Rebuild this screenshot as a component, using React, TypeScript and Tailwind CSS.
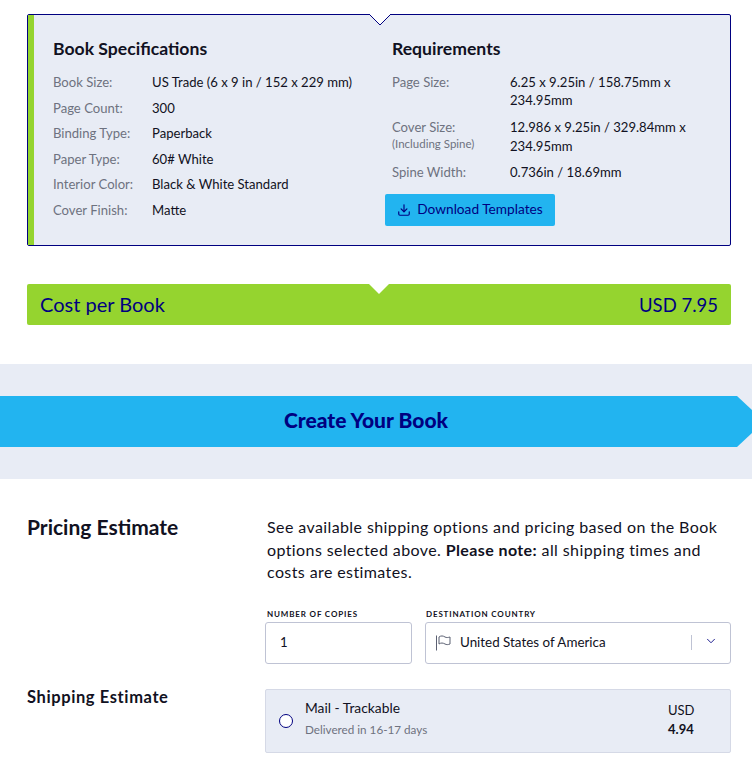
import { ChevronDown, Download } from "lucide-react";

const specs = [
  ["Book Size:", "US Trade (6 x 9 in / 152 x 229 mm)"],
  ["Page Count:", "300"],
  ["Binding Type:", "Paperback"],
  ["Paper Type:", "60# White"],
  ["Interior Color:", "Black & White Standard"],
  ["Cover Finish:", "Matte"],
];

export default function App() {
  return (
    <div className="min-h-[759px] overflow-hidden bg-white font-['Lato',sans-serif] text-[#111122]">
      <div className="pt-[14px] pr-[21px] pl-[27px]">
        {/* spec card */}
        <div className="relative flex h-[232px] rounded-[2px] border border-[#000080] bg-[#e8ecf5]">
          <div className="w-[6px] bg-[#95d42f]" />
          <div className="w-[339px] pt-[24px] pl-[19px]">
            <h3 className="mb-[11px] text-[17.6px] leading-[20px] font-bold">Book Specifications</h3>
            {specs.map(([label, value]) => (
              <div key={label} className="flex h-[25.6px] items-center text-[13.1px]">
                <span className="w-[99px] text-[#6e7280]">{label}</span>
                <span>{value}</span>
              </div>
            ))}
          </div>
          <div className="flex-1 pt-[24px]">
            <h3 className="mb-[14px] pl-[19px] text-[17.6px] leading-[20px] font-bold">Requirements</h3>
            <div className="flex pl-[19px] text-[13.1px] leading-[18px]">
              <span className="w-[118px] text-[#6e7280]">Page Size:</span>
              <span className="w-[190px]">6.25 x 9.25in / 158.75mm x 234.95mm</span>
            </div>
            <div className="mt-[9px] flex pl-[19px] text-[13.1px] leading-[18.5px]">
              <div className="w-[118px] text-[#6e7280]">
                Cover Size:
                <div className="text-[11.5px] leading-[14px]">(Including Spine)</div>
              </div>
              <span className="w-[190px]">12.986 x 9.25in / 329.84mm x 234.95mm</span>
            </div>
            <div className="mt-[8px] flex pl-[19px] text-[13.1px] leading-[18.5px]">
              <span className="w-[118px] text-[#6e7280]">Spine Width:</span>
              <span>0.736in / 18.69mm</span>
            </div>
            <button className="mt-[12px] ml-[12px] flex h-[32px] w-[170px] items-center justify-center gap-[6px] rounded-[2px] bg-[#22b4f0] text-[13.7px] text-[#000080]">
              <Download size={14} />
              Download Templates
            </button>
          </div>
          {/* notch in the top edge */}
          <svg className="absolute top-[-1px] left-[341px]" width="22" height="12" viewBox="0 0 22 12">
            <path d="M0 0 L11 11 L22 0 Z" fill="#ffffff" />
            <path d="M0 0 L11 11 L22 0" fill="none" stroke="#000080" strokeWidth="1" />
          </svg>
        </div>

        {/* cost bar */}
        <div className="relative mt-[38px] flex h-[41px] items-center justify-between rounded-[2px] bg-[#95d42f] px-[13px] leading-[24px] text-[#000080]">
          <span className="mb-[2px] text-[20px]">Cost per Book</span>
          <span className="text-[18.5px]">USD 7.95</span>
          <svg className="absolute top-0 left-[342px]" width="20" height="10" viewBox="0 0 20 10">
            <path d="M0 0 L10 10 L20 0 Z" fill="#ffffff" />
          </svg>
        </div>
      </div>

      {/* create band */}
      <div className="mt-[39px] h-[115px] bg-[#e8ecf5] pt-[32px]">
        <div className="flex h-[51px] items-center justify-center bg-[#22b4f0] pr-[20px] [clip-path:polygon(0_0,737px_0,752px_14px,752px_37px,737px_51px,0_51px)]">
          <span className="mb-[4px] text-[21px] font-black text-[#000080]">Create Your Book</span>
        </div>
      </div>

      {/* pricing */}
      <div className="pt-[35px] pr-[21px] pl-[27px]">
        <div className="flex">
          <h2 className="w-[240px] shrink-0 pt-px text-[21px] leading-[24px] font-bold">Pricing Estimate</h2>
          <p className="w-[464px] pt-[2px] text-[16px] leading-[22.5px] tracking-[0.4px]">
            See available shipping options and pricing based on the Book options selected above. <b>Please note:</b> all shipping times and costs are estimates.
          </p>
        </div>

        <div className="mt-[25px] ml-[238px] flex gap-[13px]">
          <div className="w-[147px]">
            <div className="mb-[3px] pl-[2px] text-[8px] leading-[10px] font-bold tracking-[0.85px]">NUMBER OF COPIES</div>
            <div className="flex h-[42px] items-center rounded-[3px] border border-[#bfc3d4] pl-[14px] text-[13.2px]">1</div>
          </div>
          <div className="flex-1">
            <div className="mb-[3px] pl-px text-[8px] leading-[10px] font-bold tracking-[0.85px]">DESTINATION COUNTRY</div>
            <div className="flex h-[42px] items-center rounded-[3px] border border-[#bfc3d4] pl-[10px] text-[13.4px]">
              <svg width="15" height="16" viewBox="0 0 15 16" fill="none" stroke="#5b6072" strokeWidth="1">
                <path d="M0.5 0.5 V15.5" />
                <path d="M3 2 C5 0.5 7 0.7 9 2 C10.5 2.8 12 2.6 14 2 V9 C12 9.8 10.5 9.8 9 9 C7 7.8 5 7.6 3 9 Z" />
              </svg>
              <span className="ml-[9px] flex-1">United States of America</span>
              <div className="h-[15px] w-px bg-[#bfc3d4]" />
              <ChevronDown size={14} strokeWidth={1.5} className="mx-[12px] mb-[3px] text-[#000080]" />
            </div>
          </div>
        </div>

        <div className="mt-[25px] flex">
          <h3 className="mt-[-2px] w-[238px] pt-px text-[16.5px] leading-[18px] font-bold tracking-[0.6px]">Shipping Estimate</h3>
          <div className="flex h-[64px] flex-1 items-center rounded-[2px] border border-[#d5d9e6] bg-[#e8ecf5] pl-[13px]">
            <div className="h-[14px] w-[14px] rounded-full border-[1.5px] border-[#000080] bg-white" />
            <div className="ml-[12px] flex-1">
              <div className="mt-[-5px] text-[13.8px] leading-[18px]">Mail - Trackable</div>
              <div className="mt-[5px] text-[11.7px] leading-[15px] text-[#6e7280]">Delivered in 16-17 days</div>
            </div>
            <div className="mb-[2px] w-[62px] text-[13px] leading-[19px]">
              USD
              <div className="font-bold">4.94</div>
            </div>
          </div>
        </div>
      </div>
    </div>
  );
}
